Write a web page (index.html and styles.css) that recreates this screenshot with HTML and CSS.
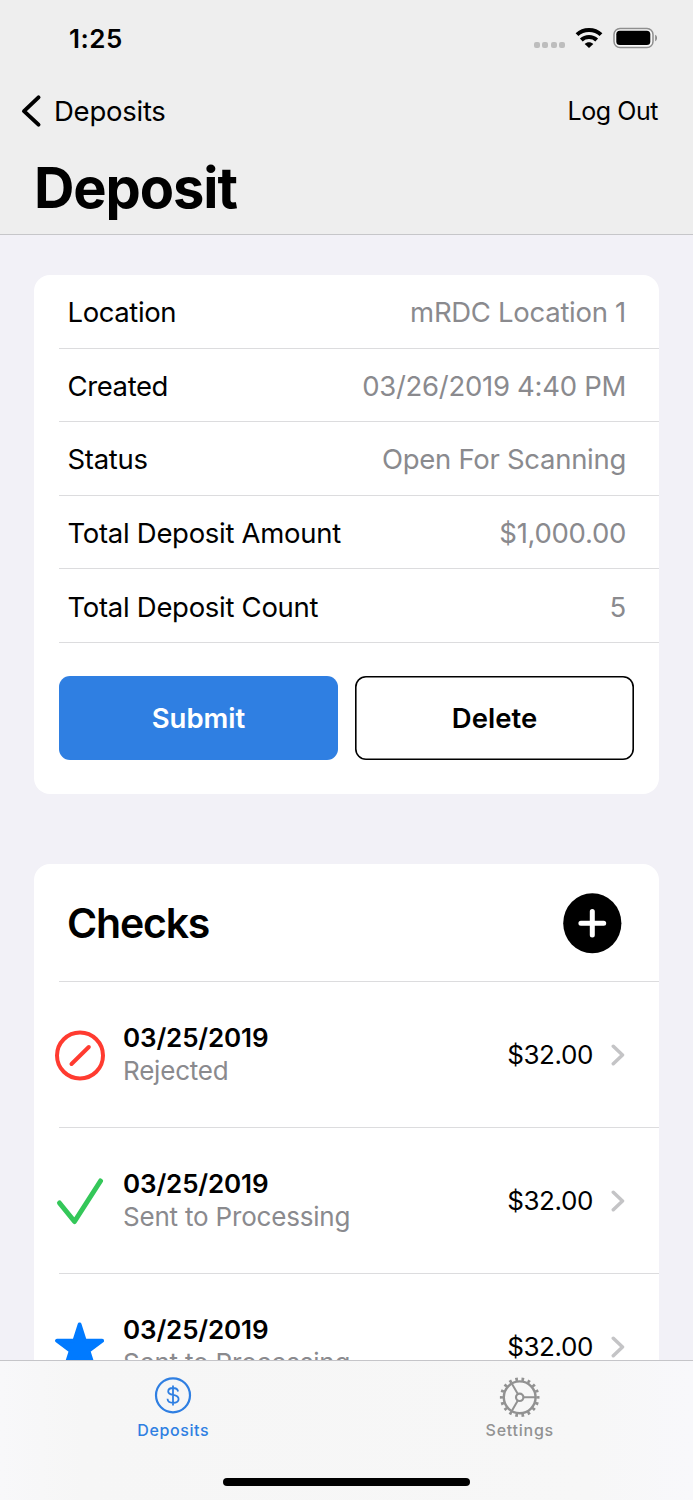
FILE: index.html
```html
<!DOCTYPE html>
<html lang="en">
<head>
<meta charset="utf-8">
<title>Deposit</title>
<link rel="stylesheet" href="styles.css">
</head>
<body>
<div class="phone">
  <header class="header">
    <div class="status">
      <span class="time">1:25</span>
      <div class="status-icons">
        <span class="cell"><i></i><i></i><i></i><i></i></span>
        <svg class="wifi" width="28" height="22" viewBox="0 0 28 22"><g fill="none" stroke="#000" stroke-width="4"><path d="M2 7.600C8.500 1.400 19.500 1.400 26 7.600"/><path d="M6.300 13C10.500 9 17.500 9 21.700 13"/></g><path d="M14 20.900L9.700 16.900C12.100 14.700 15.900 14.700 18.300 16.900Z"/></svg>
        <svg class="battery" width="45" height="22" viewBox="0 0 45 22"><rect x="1" y="1.500" width="39" height="19" rx="6" fill="#f7f7f7" stroke="#8f8f8f" stroke-width="1.500"/><rect x="3.300" y="3.800" width="34" height="14.300" rx="3.500"/><path d="M42.200 7.800C44.600 8.800 44.600 13.200 42.200 14.200Z" fill="#888"/></svg>
      </div>
    </div>
    <nav class="nav">
      <a class="back"><svg width="22" height="34" viewBox="0 0 22 34"><path d="M18.500 3.400L4 17.100L18.500 30.600" fill="none" stroke="#000" stroke-width="4" stroke-linecap="round" stroke-linejoin="round"/></svg><span>Deposits</span></a>
      <a class="logout">Log Out</a>
    </nav>
    <h1 class="title">Deposit</h1>
  </header>
  <main class="content">
    <section class="card">
      <dl class="details">
        <div class="row"><dt class="snug">Location</dt><dd>mRDC Location 1</dd></div>
        <div class="row"><dt class="snug">Created</dt><dd>03/26/2019 4:40 PM</dd></div>
        <div class="row"><dt>Status</dt><dd>Open For Scanning</dd></div>
        <div class="row"><dt>Total Deposit Amount</dt><dd>$1,000.00</dd></div>
        <div class="row"><dt>Total Deposit Count</dt><dd>5</dd></div>
      </dl>
      <div class="actions"><button class="btn primary">Submit</button><button class="btn">Delete</button></div>
    </section>
    <section class="card checks">
      <div class="checks-head">
        <h2>Checks</h2>
        <svg width="60" height="62" viewBox="0 0 60 62"><ellipse cx="30.300" cy="31.200" rx="29.100" ry="30"/><path d="M30.300 19.500V43M18.900 31.200H41.700" stroke="#fff" stroke-width="5" stroke-linecap="round"/></svg>
      </div>
      <div class="check">
        <svg class="mark" width="54" height="54" viewBox="0 0 54 54"><g fill="none" stroke="#ff3b30" stroke-width="4"><circle cx="27" cy="27.500" r="23"/><path d="M18.500 36L35.800 19" stroke-linecap="round"/></g></svg>
        <div class="info"><b>03/25/2019</b><span>Rejected</span></div>
        <span class="amount">$32.00</span>
        <svg class="chev" width="14" height="22" viewBox="0 0 14 22"><path d="M2.300 2.300L11.500 11L2.300 19.700"/></svg>
      </div>
      <div class="check">
        <svg class="mark" width="54" height="54" viewBox="0 0 54 54"><path d="M6.500 29L21.500 47.500L47.500 7" fill="none" stroke="#34c759" stroke-width="5" stroke-linecap="round" stroke-linejoin="round"/></svg>
        <div class="info"><b>03/25/2019</b><span>Sent to Processing</span></div>
        <span class="amount">$32.00</span>
        <svg class="chev" width="14" height="22" viewBox="0 0 14 22"><path d="M2.300 2.300L11.500 11L2.300 19.700"/></svg>
      </div>
      <div class="check">
        <svg class="mark" width="54" height="54" viewBox="0 0 54 54"><path d="M26.600 4.500L31.700 20.700H49.100L35.400 30.800L40.600 47.200L26.600 37.300L12.600 47.200L17.800 30.800L4.100 20.700H21.500Z" fill="#007aff" stroke="#007aff" stroke-width="4" stroke-linejoin="round"/></svg>
        <div class="info"><b>03/25/2019</b><span>Sent to Processing</span></div>
        <span class="amount">$32.00</span>
        <svg class="chev" width="14" height="22" viewBox="0 0 14 22"><path d="M2.300 2.300L11.500 11L2.300 19.700"/></svg>
      </div>
    </section>
  </main>
  <footer class="tabbar">
    <div class="tabs">
      <a class="tab active">
        <svg width="42" height="42" viewBox="0 0 42 42" fill="none" stroke="#2f7fe2"><circle cx="21" cy="19.300" r="17" stroke-width="2.200"/><path d="M26.100 15.500C25.700 13 23.700 12 21 12C18.200 12 16.200 13.300 16.200 15.500C16.200 20.500 26.600 17.400 26.600 23C26.600 25.500 24.300 26.900 21 26.900C17.700 26.900 15.700 25.400 15.500 22.800M21 9.500V29.500" stroke-width="1.800"/></svg>
        <span>Deposits</span>
      </a>
      <a class="tab settings">
        <svg width="42" height="42" viewBox="0 0 42 42" fill="none" stroke="#929292"><circle cx="20.700" cy="21.300" r="15.900" stroke-width="2.400"/><circle cx="20.700" cy="21.300" r="18.200" stroke-width="3.200" pathLength="18" stroke-dasharray=".42 .58" stroke-dashoffset=".21"/><circle cx="20.700" cy="21.300" r="3.700" stroke-width="2.200"/><path d="M24.700 21.300H36.700M18.700 17.800L12.600 7.300M18.700 24.800L12.600 35.300" stroke-width="2"/></svg>
        <span>Settings</span>
      </a>
    </div>
    <div class="home"></div>
  </footer>
</div>
</body>
</html>
```
FILE: styles.css
```css
* { box-sizing: border-box; }
body { margin: 0; font-family: Inter, "Liberation Sans", sans-serif; color: #000; }
.phone { width: 693px; height: 1500px; display: flex; flex-direction: column; overflow: hidden; background: #f2f1f7; }
.header { flex: none; height: 235px; background: #eee; border-bottom: 1px solid #c6c6c9; }
.status { height: 76px; padding: 0 35px 0 69px; display: flex; justify-content: space-between; align-items: center; }
.time { padding-top: 1px; font-size: 26px; font-weight: 600; line-height: 30px; letter-spacing: .500px; }
.status-icons { display: flex; align-items: center; }
.cell { display: flex; gap: 2.400px; margin: 13px 10px 0 0; }
.cell i { width: 6px; height: 6px; border-radius: 2px; background: #bdbdbd; }
.battery { margin-left: 10px; }
.nav { height: 70px; padding: 0 35px 0 20px; display: flex; justify-content: space-between; align-items: center; font-size: 27.500px; }
.back { display: flex; align-items: center; gap: 12px; letter-spacing: -.250px; }
.logout { font-size: 25px; letter-spacing: -.450px; }
.title { margin: 7px 0 0 34px; font-size: 56px; line-height: 70px; font-weight: 700; letter-spacing: -1.100px; }
.content { flex: none; height: 1125px; padding: 40px 34px 0; overflow: hidden; }
.card { background: #fff; border-radius: 16px; height: 519px; }
.details { margin: 0; }
.row { height: 73.600px; margin-left: 25px; padding: 2px 33px 0 8.500px; border-bottom: 1px solid #dcdcde; display: flex; justify-content: space-between; align-items: center; font-size: 27.500px; letter-spacing: -.290px; }
.row .snug { letter-spacing: -.400px; }
.row dd { margin: 0; color: #8a8a8e; }
.actions { padding: 33.500px 25px 0; display: flex; gap: 17px; }
.btn { flex: 1; height: 84px; border: 0; box-shadow: inset 0 0 0 1.600px #000; border-radius: 11px; background: #fff; color: #000; font: 600 27.500px Inter, sans-serif; padding: 0; }
.primary { background: #2f7fe2; box-shadow: none; color: #fff; }
.checks { margin-top: 70px; height: 600px; }
.checks-head { height: 118px; margin-left: 25px; padding: 0 37px 0 8px; border-bottom: 1px solid #dcdcde; display: flex; justify-content: space-between; align-items: center; }
.checks h2 { margin: 0; font-size: 41px; font-weight: 600; letter-spacing: -1.200px; }
.check { height: 146px; margin-left: 25px; padding-right: 34px; border-bottom: 1px solid #dcdcde; display: flex; align-items: center; }
.mark { flex: none; margin: 1px 16px 0 -6px; }
.info { display: flex; flex-direction: column; padding-bottom: 2px; font-size: 26px; line-height: 33px; flex: 1; letter-spacing: -.150px; }
.info b { font-weight: 600; }
.info span { color: #8a8a8e; letter-spacing: -.200px; }
.amount { font-size: 26px; letter-spacing: -.400px; }
.chev { margin-left: 18px; fill: none; stroke: #c4c4c6; stroke-width: 3.500px; stroke-linecap: round; stroke-linejoin: round; }
.tabbar { flex: none; height: 140px; background: linear-gradient(90deg, #f8f8fa, #f6f6f6 12%, #f7f7f7 85%, #f8f8fb); border-top: 1px solid #c5c5c9; }
.tabs { display: flex; height: 117px; padding-top: 15px; }
.tab { flex: 1; display: flex; flex-direction: column; align-items: center; font-size: 16px; line-height: 20px; letter-spacing: .600px; font-weight: 500; color: #929292; }
.tab span { margin-top: 2px; }
.active { color: #2f7fe2; }
.settings { letter-spacing: .750px; }
.home { width: 247px; height: 8px; margin: 0 auto; border-radius: 4px; background: #000; }
```
